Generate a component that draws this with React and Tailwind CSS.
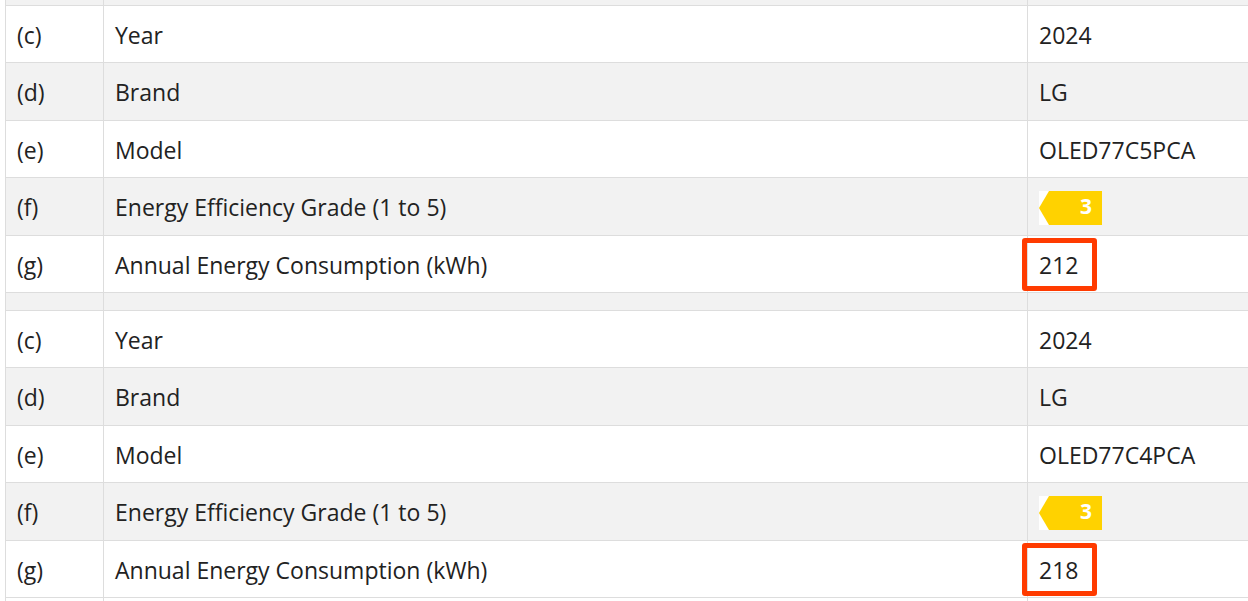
const groups = [
  { model: "OLED77C5PCA", kwh: "212" },
  { model: "OLED77C4PCA", kwh: "218" },
];

const heights = ["h-[57px]", "h-[58px]", "h-[57px]", "h-[58px]", "h-[57px]"];

function GradeBadge({ grade }) {
  return (
    <div className="flex h-[34px] w-[63px] items-center bg-white">
      <svg width="63" height="34" viewBox="0 0 63 34">
        <polygon points="10,0 63,0 63,34 10,34 0,17" fill="#ffd200" />
        <text x="47" y="23" fill="#fff" fontSize="21" fontWeight="700" fontFamily="'Open Sans', sans-serif" textAnchor="middle">
          {grade}
        </text>
      </svg>
    </div>
  );
}

function Row({ h, bg, label, name, children, mark }) {
  return (
    <div className={`grid grid-cols-[98px_924px_1fr] border-b border-[#dddddd] ${h} ${bg}`}>
      <div className="flex items-center border-r border-[#dddddd] pl-[11px] pt-[2px]">{label}</div>
      <div className="flex items-center border-r border-[#dddddd] pl-[11px] pt-[2px]">{name}</div>
      <div className="relative flex items-center pl-[11px] pt-[2px]">
        {children}
        {mark && <div className="absolute left-[-6px] top-[2px] h-[53px] w-[75px] rounded-[3px] border-[5px] border-[#ff3b00]" />}
      </div>
    </div>
  );
}

function Spacer({ h }) {
  return (
    <div className={`grid grid-cols-[98px_924px_1fr] border-b border-[#dddddd] bg-[#f2f2f2] ${h}`}>
      <div className="border-r border-[#dddddd]" />
      <div className="border-r border-[#dddddd]" />
      <div />
    </div>
  );
}

export default function App() {
  return (
    <div className="h-[601px] w-[1248px] overflow-hidden bg-white pl-[5px] text-[23px] text-[#222] font-['Open_Sans',sans-serif]">
      <div className="border-l border-[#dddddd]">
        <Spacer h="h-[6px]" />
        {groups.map((g, gi) => {
          const rows = [
            ["(c)", "Year", "2024"],
            ["(d)", "Brand", "LG"],
            ["(e)", "Model", g.model],
            ["(f)", "Energy Efficiency Grade (1 to 5)", null],
            ["(g)", "Annual Energy Consumption (kWh)", g.kwh],
          ];
          return (
            <div key={gi}>
              {rows.map((r, i) => (
                <Row key={i} h={heights[i]} bg={i % 2 ? "bg-[#f2f2f2]" : "bg-white"} label={r[0]} name={r[1]} mark={i === 4}>
                  {r[2] === null ? <GradeBadge grade="3" /> : r[2]}
                </Row>
              ))}
              {gi === 0 && <Spacer h="h-[18px]" />}
            </div>
          );
        })}
        <div className="grid h-[20px] grid-cols-[98px_924px_1fr]">
          <div className="border-r border-[#dddddd]" />
          <div className="border-r border-[#dddddd]" />
          <div />
        </div>
      </div>
    </div>
  );
}
